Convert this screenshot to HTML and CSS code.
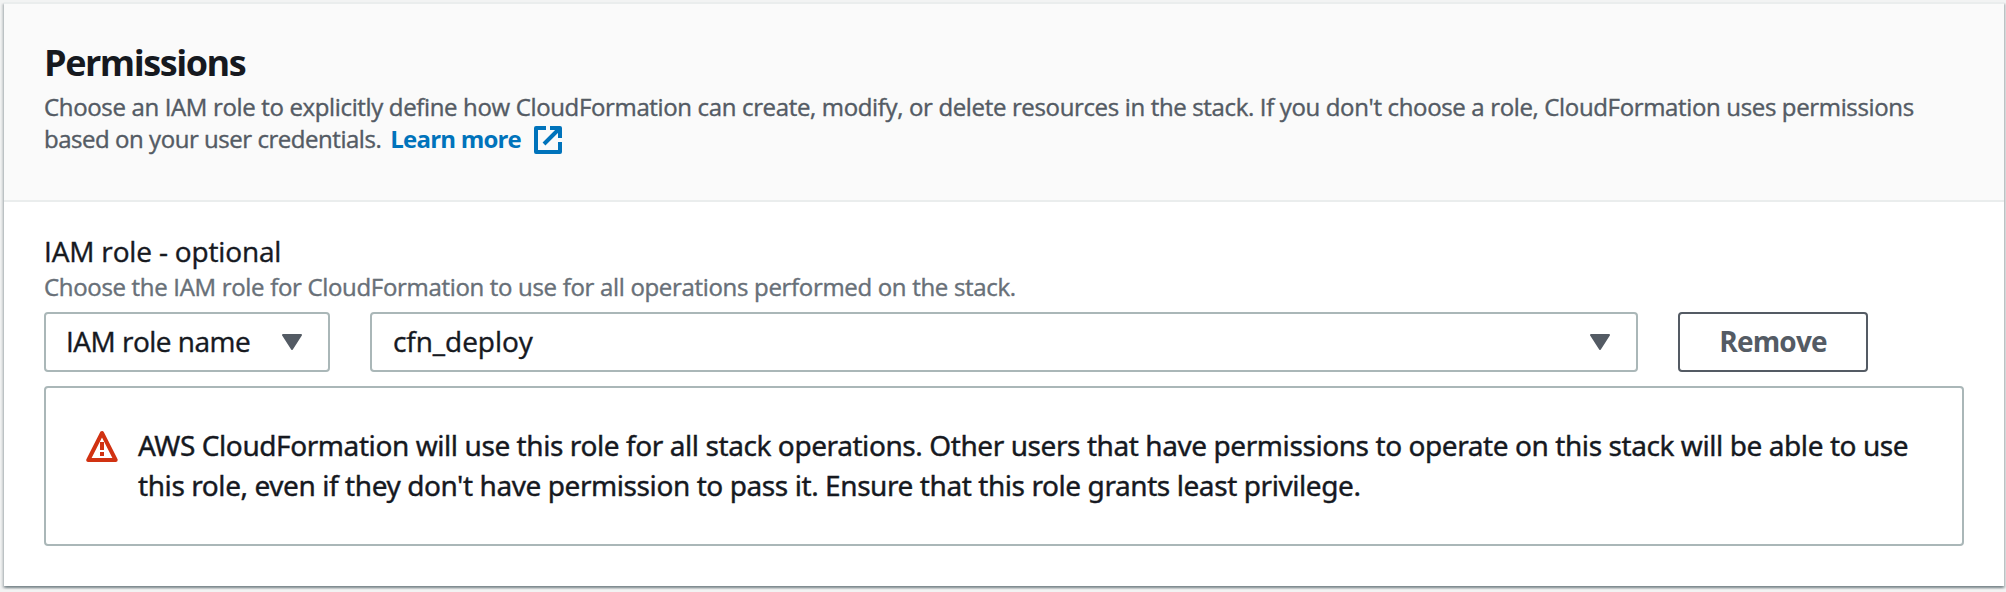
FILE: index.html
```html
<!DOCTYPE html>
<html lang="en">
<head>
<meta charset="utf-8">
<title>Permissions</title>
<link rel="stylesheet" href="styles.css">
</head>
<body>
<section class="card">
  <header class="card-header">
    <h2 class="title">Permissions</h2>
    <p class="description">Choose an IAM role to explicitly define how CloudFormation can create, modify, or delete resources in the stack. If you don't choose a role, CloudFormation uses permissions<br><span class="description-end">based on your user credentials.</span><a class="link" href="#">Learn more<svg class="external" viewBox="0 0 28 28" width="28" height="28"><path d="M12 2H2v24h24V16M16 2h10v10M25 3 10 18" fill="none" stroke="currentColor" stroke-width="4" stroke-linejoin="round"/></svg></a></p>
  </header>
  <div class="card-body">
    <div class="label">IAM role - optional</div>
    <div class="hint">Choose the IAM role for CloudFormation to use for all operations performed on the stack.</div>
    <div class="controls">
      <div class="select select-kind"><span class="select-kind-text">IAM role name</span><svg class="caret" viewBox="0 0 20 16" width="20" height="16"><path d="M1 1h18L10 15z" fill="currentColor" stroke="currentColor" stroke-width="2" stroke-linejoin="round"/></svg></div>
      <div class="select select-role"><span class="select-role-text">cfn_deploy</span><svg class="caret" viewBox="0 0 20 16" width="20" height="16"><path d="M1 1h18L10 15z" fill="currentColor" stroke="currentColor" stroke-width="2" stroke-linejoin="round"/></svg></div>
      <button class="button" type="button">Remove</button>
    </div>
    <div class="alert">
      <svg class="warning" viewBox="0 0 32 32" width="32" height="32"><path d="M16 3 2.3 30h27.4z" fill="none" stroke="currentColor" stroke-width="4" stroke-linejoin="round"/><path d="M16 12v8M16 22v4" fill="none" stroke="currentColor" stroke-width="4"/></svg>
      <p class="alert-text">AWS CloudFormation will use this role for all stack operations. Other users that have permissions to operate on this stack will be able to use<br>this role, even if they don't have permission to pass it. Ensure that this role grants least privilege.</p>
    </div>
  </div>
</section>
</body>
</html>
```
FILE: styles.css
```css
* { box-sizing: border-box; }

body {
  margin: 0;
  padding: 2px 2px 6px 4px;
  height: 592px;
  overflow: hidden;
  background: #f2f3f3;
  color: #16191f;
  font-family: "Open Sans", "Noto Sans", sans-serif;
  font-size: 28px;
  font-weight: 400;
  line-height: 40px;
  -webkit-text-stroke: 0.4px currentColor;
}

.card {
  height: 584px;
  background: #fff;
  border-top: 2px solid #eaeded;
  box-shadow: 0 2px 2px rgba(0, 28, 36, 0.3), 2px 2px 2px rgba(0, 28, 36, 0.15), -2px 2px 2px rgba(0, 28, 36, 0.15);
}

.card-header {
  height: 198px;
  padding: 37px 40px 0;
  background: #fafafa;
  border-bottom: 2px solid #eaeded;
}

.title {
  margin: 0 0 6px;
  font-size: 36px;
  line-height: 44px;
  font-weight: 700;
  letter-spacing: -1.45px;
  -webkit-text-stroke: 0;
}

.description {
  margin: 0;
  color: #545b64;
  font-size: 24px;
  line-height: 32px;
  letter-spacing: -0.35px;
  white-space: nowrap;
}

.description-end { letter-spacing: -0.46px; }

.link {
  margin-left: 9px;
  color: #0073bb;
  font-weight: 700;
  letter-spacing: -0.8px;
  text-decoration: none;
  -webkit-text-stroke: 0;
}

.external {
  margin-left: 13px;
  vertical-align: -6px;
}

.card-body { padding: 29px 40px 40px; }

.label { letter-spacing: -0.16px; }

.hint {
  color: #687078;
  font-size: 24px;
  line-height: 32px;
  letter-spacing: -0.32px;
}

.controls {
  display: flex;
  gap: 40px;
  margin: 9px 0 14px;
}

.select {
  display: flex;
  align-items: center;
  justify-content: space-between;
  height: 60px;
  padding: 0 26px 0 20px;
  border: 2px solid #aab7b8;
  border-radius: 4px;
}

.select-kind { width: 286px; }
.select-kind-text { margin-bottom: 2px; letter-spacing: -0.5px; }
.select-role { width: 1268px; }
.select-role-text { margin: 0 0 2px 1px; letter-spacing: -0.05px; }
.caret { color: #545b64; }

.button {
  width: 190px;
  height: 60px;
  padding: 0 0 2px;
  background: #fff;
  border: 2px solid #545b64;
  border-radius: 4px;
  color: #545b64;
  font: 700 28px/40px "Open Sans", sans-serif;
  letter-spacing: -0.8px;
  -webkit-text-stroke: 0;
}

.alert {
  display: flex;
  gap: 20px;
  height: 160px;
  padding: 37px 40px;
  border: 2px solid #aab7b8;
  border-radius: 4px;
}

.warning {
  flex: none;
  margin-top: 5px;
  color: #d13212;
}

.alert-text {
  margin: 0;
  font-family: "Noto Sans", sans-serif;
  letter-spacing: -0.42px;
  white-space: nowrap;
}
```
